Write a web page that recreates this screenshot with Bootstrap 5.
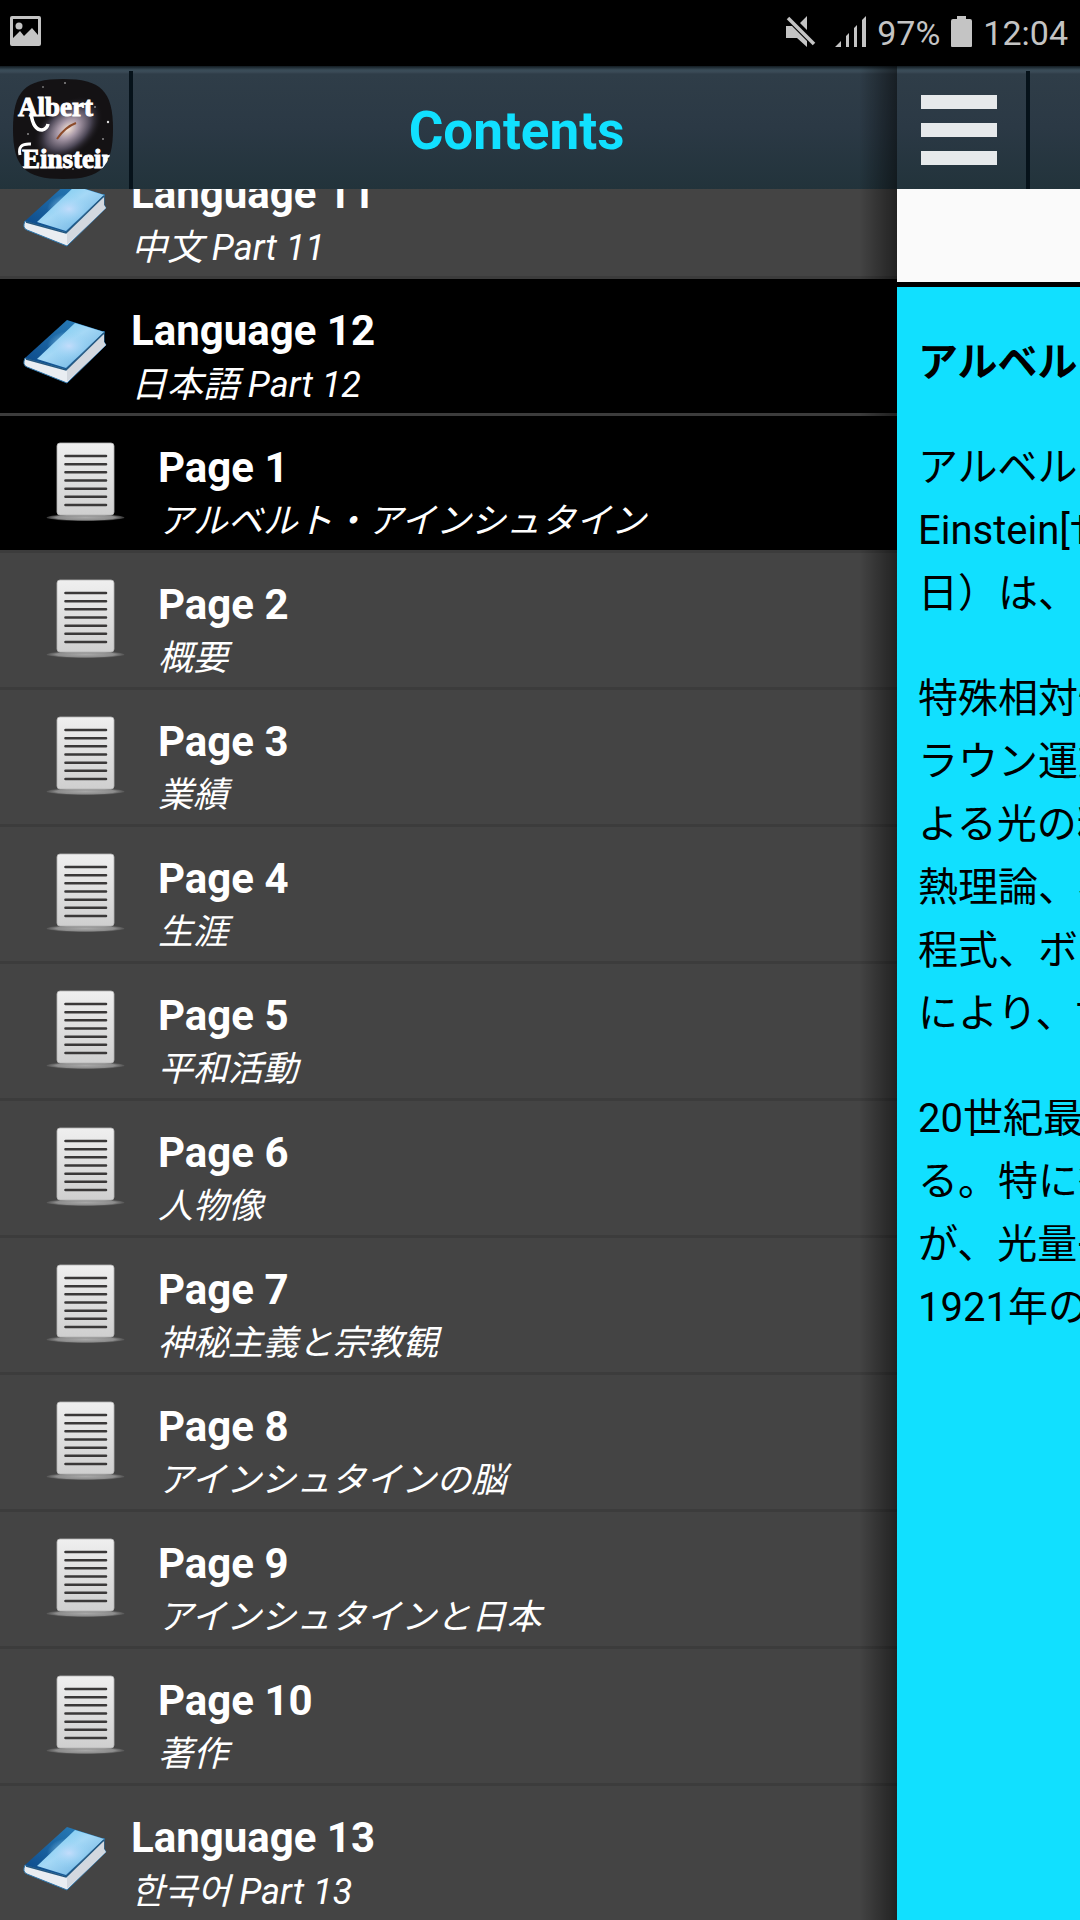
<!DOCTYPE html>
<html lang="en">
<head>
<meta charset="utf-8">
<meta name="viewport" content="width=device-width, initial-scale=1">
<title>Albert Einstein – Contents</title>
<link rel="stylesheet" href="https://cdn.jsdelivr.net/npm/bootstrap@5.3.0/dist/css/bootstrap.min.css">
<style>
  body { font-family: Roboto, "Noto Sans CJK JP", sans-serif; background: #000; }
  .statusbar { flex: none; height: 66px; padding: 0 12px 0 10px; color: #c4c4c4; font-size: 34px; line-height: 66px; }
  .statusbar svg { display: block; }
  .status-right { gap: 11px; }
  .appbar {
    height: 123px;
    background: linear-gradient(#111a20 0, #3a4c58 4px, #3a4a56 6px, #2f3d48 8px, #2b3945 50%, #22333b 100%);
  }
  .bar-sep { width: 4px; margin-top: 5px; background: #06121a; }
  .logo-cell, .menu-cell { width: 129px; }
  .logo-cell { padding: 13px 0 0 13px; }
  .drawer-title { font-size: 53px; line-height: 64px; color: #11e0ff; padding: 7px 0 0 3px; }
  .drawer { background: #444; }
  .drawer-shade { width: 38px; pointer-events: none; background: linear-gradient(90deg, rgba(0,0,0,0), rgba(0,0,0,.5)); }
  .toc .toc-row { display: flex; box-sizing: content-box; height: 134px; padding: 0; border: 0; border-bottom: 3px solid #3c3c3c; background: #444; color: #fff; flex: none; }
  .toc .toc-row:last-child { border-bottom: 0; }
  .toc .toc-row.open { background: #000; }
  .toc-icon { flex: none; width: 131px; padding: 40px 0 0 23px; }
  .page-row .toc-icon { width: 158px; padding: 26px 0 0 46px; }
  .toc-icon svg { display: block; }
  .toc-text { padding-top: 25px; line-height: 54px; white-space: nowrap; }
  .toc-name { font-size: 42px; }
  .toc-sub { font-size: 36px; }
  .page-row .toc-sub { font-size: 35px; }
  .reader { flex: none; width: 183px; }
  .menu-btn { padding: 29px 0 0 24px; border: 0; background: none; width: 129px; }
  .menu-btn span { display: block; width: 76px; height: 14px; margin-bottom: 14px; background: #e6e9eb; }
  .ad-strip { height: 98px; background: #fafafa; border-bottom: 5px solid #000; }
  .article { background: #11e0ff; color: #000; padding: 44px 0 0 21px; font-size: 40px; line-height: 63px; white-space: nowrap; }
  .article h1 { font-size: 40px; line-height: 63px; margin: 0 0 42px; font-weight: 700; }
  .article p { margin: 0 0 42px; }
</style>
<script src="https://cdn.jsdelivr.net/npm/bootstrap@5.3.0/dist/js/bootstrap.bundle.min.js"></script>
</head>
<body>
<svg width="0" height="0" class="position-absolute" aria-hidden="true">
  <defs>
    <linearGradient id="cover" x1="0" y1="0" x2="1" y2="1"><stop offset="0" stop-color="#5fc4ee"/><stop offset=".45" stop-color="#a5d8f6"/><stop offset="1" stop-color="#5fa9dc"/></linearGradient>
    <radialGradient id="glow"><stop offset="0" stop-color="#c3dcfb"/><stop offset="1" stop-color="#8fd3f5" stop-opacity="0"/></radialGradient>
    <linearGradient id="spine" x1="1" y1="0" x2="0" y2="1"><stop offset="0" stop-color="#2d86c0"/><stop offset="1" stop-color="#0b4788"/></linearGradient>
    <linearGradient id="sheet" x1="0" y1="0" x2="0" y2="1"><stop offset="0" stop-color="#efefef"/><stop offset="1" stop-color="#cfcfcf"/></linearGradient>
    <radialGradient id="floor"><stop offset="0" stop-color="#a8a8a8"/><stop offset=".75" stop-color="#8c8c8c"/><stop offset="1" stop-color="#666" stop-opacity=".5"/></radialGradient>
    <radialGradient id="galaxy"><stop offset="0" stop-color="#f6e4d6"/><stop offset=".3" stop-color="#a899a8"/><stop offset=".65" stop-color="#4a4554"/><stop offset="1" stop-color="#161417" stop-opacity="0"/></radialGradient>
  </defs>
  <symbol id="book" viewBox="0 0 84 66">
    <path d="M2 39Q-1 46 4 48L44 64L83 26L81 23L81 12L43 50Z" fill="#e9edf2" stroke="#2f77ad" stroke-width="1"/>
    <path d="M44 63V51L81 15V23L83 26Z" fill="#d3d8df"/>
    <path d="M44 1L82 13L43 50L2 39Z" fill="url(#spine)"/>
    <path d="M52 4L81 13L43 49L14 40Z" fill="url(#cover)"/>
    <ellipse cx="46" cy="27" rx="22" ry="15" fill="url(#glow)"/>
    <path d="M3 40L43 51L81 14" fill="none" stroke="#24577f" stroke-width="1.5"/>
  </symbol>
  <symbol id="sheet-icon" viewBox="0 0 80 82">
    <ellipse cx="39.500" cy="75.500" rx="39" ry="3.500" fill="url(#floor)"/>
    <rect x="11" y="1" width="57" height="72" rx="3" fill="url(#sheet)" stroke="#b4b4b4" stroke-width=".8"/>
    <path d="M19.500 14H60M19.500 22.200H60M19.500 30.300H60M19.500 38.500H60M19.500 46.700H60M19.500 54.800H60M19.500 63H60" stroke="#3a3838" stroke-width="2.600" stroke-linecap="round"/>
  </symbol>
</svg>

<div class="vh-100 d-flex flex-column overflow-hidden">
  <div class="statusbar d-flex justify-content-between">
    <svg class="mt-3" width="31" height="31" viewBox="0 0 31 31" aria-label="Image"><path fill="#c4c4c4" fill-rule="evenodd" d="M2 0H29Q31 0 31 2V28Q31 30 29 30H2Q0 30 0 28V2Q0 0 2 0ZM3 3V22L10 15L14 20L22 12L28 19V3Z"/><circle cx="9" cy="10" r="3.500" fill="#c4c4c4"/></svg>
    <div class="status-right d-flex">
      <svg class="mt-3 me-2" width="30" height="32" viewBox="0 0 30 32" aria-label="Muted"><path fill="#c4c4c4" d="M0 10H6L21 25V31L11 22H0ZM14 7L21 0V14Z"/><path d="M1 4L28 31" stroke="#000" stroke-width="3" transform="translate(3 -3)"/><path d="M2 2L28 28" stroke="#c4c4c4" stroke-width="3.500"/></svg>
      <svg class="mt-3" width="31" height="32" viewBox="0 0 31 32" aria-label="Signal"><path fill="#c4c4c4" d="M0 31L6 25V31ZM11 20L14 17V31H11ZM19 12L22 9V31H19ZM27 4L31 0V31H27Z"/></svg>
      <span>97%</span>
      <svg class="mt-3" width="21" height="32" viewBox="0 0 21 32" aria-label="Battery"><path fill="#c4c4c4" d="M6 0H15V3H19Q21 3 21 5V30Q21 31 20 31H1Q0 31 0 30V5Q0 3 2 3H6Z"/></svg>
      <span>12:04</span>
    </div>
  </div>

  <div class="d-flex flex-fill overflow-hidden">
    <aside class="drawer position-relative d-flex flex-column flex-fill overflow-hidden">
      <header class="appbar d-flex flex-shrink-0">
        <div class="logo-cell">
          <svg width="102" height="102" viewBox="0 0 102 102" role="img" aria-label="Albert Einstein">
            <clipPath id="squircle"><path d="M50 0C88 0 100 12 100 50S88 100 50 100S0 88 0 50S12 0 50 0Z"/></clipPath>
            <g clip-path="url(#squircle)">
              <rect width="102" height="102" fill="#141214"/>
              <ellipse cx="55" cy="50" rx="40" ry="26" fill="url(#galaxy)" transform="rotate(-40 55 50)"/>
              <path d="M44 60Q52 48 63 44" stroke="#8c4b2a" stroke-width="2" fill="none"/>
              <g fill="#ddd"><circle cx="95" cy="43" r="1.200"/><circle cx="52" cy="4" r=".8"/><circle cx="82" cy="28" r=".8"/><circle cx="15" cy="55" r=".8"/><circle cx="90" cy="60" r=".8"/><circle cx="30" cy="8" r=".7"/><circle cx="60" cy="90" r=".7"/></g>
              <g fill="#fff" stroke="#fff" stroke-width="1" font-family="Liberation Serif, serif" font-weight="700">
                <text x="5" y="37" font-size="27">Albert</text>
                <text x="9" y="89" font-size="27">Einstein</text>
              </g>
              <path d="M18 34Q20 51 29 51Q34 50 35 45" fill="none" stroke="#fff" stroke-width="3.500"/>
              <path d="M7 76Q4 64 18 65" fill="none" stroke="#fff" stroke-width="3"/>
            </g>
          </svg>
        </div>
        <div class="bar-sep"></div>
        <div class="flex-fill d-flex align-items-center justify-content-center"><h2 class="drawer-title fw-bold m-0">Contents</h2></div>
      </header>
      <nav class="flex-fill d-flex flex-column justify-content-end overflow-hidden" aria-label="Contents">
        <div class="toc list-group list-group-flush">
          <a href="#l11" class="toc-row list-group-item"><span class="toc-icon"><svg width="84" height="66"><use href="#book"/></svg></span><div class="toc-text"><div class="toc-name fw-bold">Language 11</div><div class="toc-sub fst-italic">中文 Part 11</div></div></a>
          <a href="#l12" class="toc-row list-group-item open"><span class="toc-icon"><svg width="84" height="66"><use href="#book"/></svg></span><div class="toc-text"><div class="toc-name fw-bold">Language 12</div><div class="toc-sub fst-italic">日本語 Part 12</div></div></a>
          <a href="#p1" class="toc-row page-row list-group-item open"><span class="toc-icon"><svg width="80" height="82"><use href="#sheet-icon"/></svg></span><div class="toc-text"><div class="toc-name fw-bold">Page 1</div><div class="toc-sub fst-italic">アルベルト・アインシュタイン</div></div></a>
          <a href="#p2" class="toc-row page-row list-group-item"><span class="toc-icon"><svg width="80" height="82"><use href="#sheet-icon"/></svg></span><div class="toc-text"><div class="toc-name fw-bold">Page 2</div><div class="toc-sub fst-italic">概要</div></div></a>
          <a href="#p3" class="toc-row page-row list-group-item"><span class="toc-icon"><svg width="80" height="82"><use href="#sheet-icon"/></svg></span><div class="toc-text"><div class="toc-name fw-bold">Page 3</div><div class="toc-sub fst-italic">業績</div></div></a>
          <a href="#p4" class="toc-row page-row list-group-item"><span class="toc-icon"><svg width="80" height="82"><use href="#sheet-icon"/></svg></span><div class="toc-text"><div class="toc-name fw-bold">Page 4</div><div class="toc-sub fst-italic">生涯</div></div></a>
          <a href="#p5" class="toc-row page-row list-group-item"><span class="toc-icon"><svg width="80" height="82"><use href="#sheet-icon"/></svg></span><div class="toc-text"><div class="toc-name fw-bold">Page 5</div><div class="toc-sub fst-italic">平和活動</div></div></a>
          <a href="#p6" class="toc-row page-row list-group-item"><span class="toc-icon"><svg width="80" height="82"><use href="#sheet-icon"/></svg></span><div class="toc-text"><div class="toc-name fw-bold">Page 6</div><div class="toc-sub fst-italic">人物像</div></div></a>
          <a href="#p7" class="toc-row page-row list-group-item"><span class="toc-icon"><svg width="80" height="82"><use href="#sheet-icon"/></svg></span><div class="toc-text"><div class="toc-name fw-bold">Page 7</div><div class="toc-sub fst-italic">神秘主義と宗教観</div></div></a>
          <a href="#p8" class="toc-row page-row list-group-item"><span class="toc-icon"><svg width="80" height="82"><use href="#sheet-icon"/></svg></span><div class="toc-text"><div class="toc-name fw-bold">Page 8</div><div class="toc-sub fst-italic">アインシュタインの脳</div></div></a>
          <a href="#p9" class="toc-row page-row list-group-item"><span class="toc-icon"><svg width="80" height="82"><use href="#sheet-icon"/></svg></span><div class="toc-text"><div class="toc-name fw-bold">Page 9</div><div class="toc-sub fst-italic">アインシュタインと日本</div></div></a>
          <a href="#p10" class="toc-row page-row list-group-item"><span class="toc-icon"><svg width="80" height="82"><use href="#sheet-icon"/></svg></span><div class="toc-text"><div class="toc-name fw-bold">Page 10</div><div class="toc-sub fst-italic">著作</div></div></a>
          <a href="#l13" class="toc-row list-group-item"><span class="toc-icon"><svg width="84" height="66"><use href="#book"/></svg></span><div class="toc-text"><div class="toc-name fw-bold">Language 13</div><div class="toc-sub fst-italic" lang="ko">한국어 Part 13</div></div></a>
        </div>
      </nav>
      <div class="drawer-shade position-absolute top-0 end-0 h-100"></div>
    </aside>

    <main class="reader d-flex flex-column overflow-hidden">
      <header class="appbar d-flex flex-shrink-0">
        <div class="menu-cell"><button class="menu-btn" type="button" aria-label="Menu"><span></span><span></span><span></span></button></div>
        <div class="bar-sep"></div>
      </header>
      <div class="ad-strip flex-shrink-0"></div>
      <article class="article flex-fill overflow-hidden" lang="ja">
        <h1>アルベルト</h1>
        <p>アルベルト<br>Einstein[†<br>日）は、</p>
        <p>特殊相対性<br>ラウン運動<br>よる光の粒<br>熱理論、零<br>程式、ボーズ<br>により、世</p>
        <p>20世紀最高<br>る。特に彼<br>が、光量子<br>1921年の</p>
      </article>
    </main>
  </div>
</div>
</body>
</html>
